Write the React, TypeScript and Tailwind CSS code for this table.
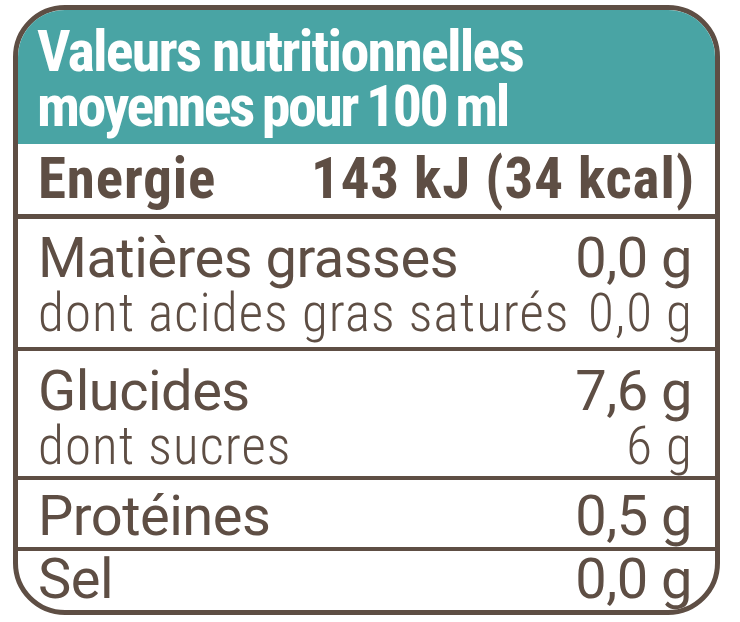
function Row({ label, value }: { label: string; value: string }) {
  return (
    <div className="flex items-baseline justify-between whitespace-nowrap">
      <span>{label}</span>
      <span>{value}</span>
    </div>
  );
}

export default function App() {
  return (
    <div className="w-[740px] h-[622px] bg-white pt-[5px] pl-[13px]">
      <div className="w-[707px] h-[610px] border-[5px] border-[#5e4e44] rounded-[52px] overflow-hidden flex flex-col text-[#5e4e44] font-['Roboto',sans-serif]">
        <div className="h-[134px] shrink-0 bg-[#49a4a4] pl-[19px] pt-[14px] text-white font-bold font-stretch-condensed text-[58px] leading-[55px]">
          <div className="tracking-[-1.8px]">Valeurs nutritionnelles</div>
          <div className="tracking-[-2.5px] [word-spacing:-2px]">moyennes pour 100 ml</div>
        </div>

        <div className="h-[75px] shrink-0 border-b-[5px] border-[#5e4e44] pl-[20px] pr-[20px] font-bold font-stretch-condensed text-[57px] leading-[70px] tracking-[0.9px]">
          <Row label="Energie" value="143 kJ (34 kcal)" />
        </div>

        <div className="h-[132px] shrink-0 border-b-[4px] border-[#5e4e44] pl-[20px] pr-[23px] pt-[11px]">
          <div className="text-[56px] leading-[56px] tracking-[-0.5px]">
            <Row label="Matières grasses" value="0,0 g" />
          </div>
          <div className="text-[53px] leading-[55px] font-light font-stretch-condensed tracking-[1.1px] -mr-[1px]">
            <Row label="dont acides gras saturés" value="0,0 g" />
          </div>
        </div>

        <div className="h-[129px] shrink-0 border-b-[4px] border-[#5e4e44] pl-[20px] pr-[23px] pt-[12px]">
          <div className="text-[56px] leading-[56px] tracking-[-0.5px]">
            <Row label="Glucides" value="7,6 g" />
          </div>
          <div className="text-[53px] leading-[55px] font-light font-stretch-condensed tracking-[1.1px] -mr-[1px]">
            <Row label="dont sucres" value="6 g" />
          </div>
        </div>

        <div className="h-[71px] shrink-0 border-b-[4px] border-[#5e4e44] pl-[20px] pr-[23px] pt-[8px] text-[56px] leading-[56px] tracking-[-0.5px]">
          <Row label="Protéines" value="0,5 g" />
        </div>

        <div className="flex-1 pl-[20px] pr-[23px] text-[56px] leading-[56px] tracking-[-0.5px]">
          <Row label="Sel" value="0,0 g" />
        </div>
      </div>
    </div>
  );
}
